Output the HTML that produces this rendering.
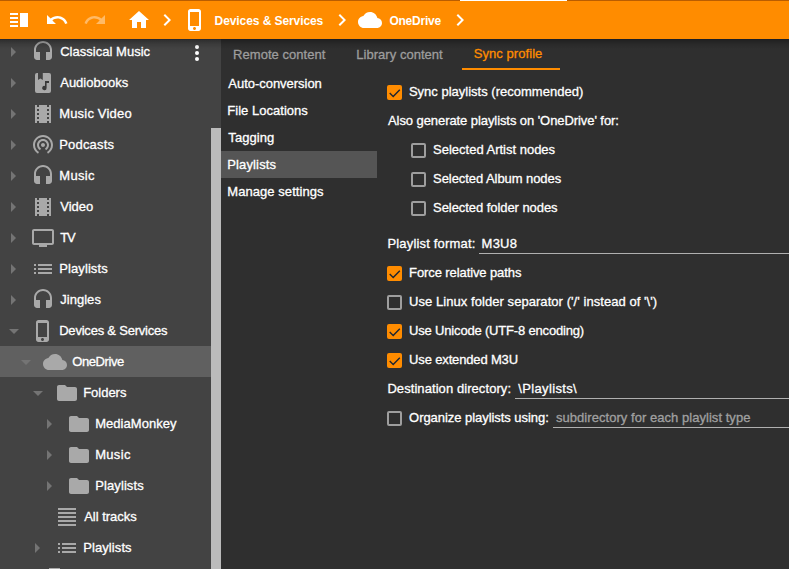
<!DOCTYPE html>
<html><head><meta charset="utf-8">
<style>
html,body{margin:0;padding:0;width:789px;height:569px;overflow:hidden;background:#2f2f2f;}
body{position:relative;font-family:"Liberation Sans",sans-serif;font-size:13px;color:#fff;}
.t{position:absolute;margin-top:1px;white-space:nowrap;line-height:16px;font-size:13px;color:#fff;-webkit-text-stroke:0.3px currentColor}
.cb{position:absolute;width:15px;height:15px;box-sizing:border-box;border-radius:2px}
.on{background:#ff8c00}
.off{border:2px solid #9e9e9e}
.ul{position:absolute;height:1px;background:#b0b0b0}
</style></head><body>
<div style="position:absolute;left:0;top:0;width:221px;height:569px;background:#434343;overflow:hidden">
<svg style="position:absolute;left:1px;top:40px" width="24" height="24" viewBox="0 0 24 24"><path fill="#747474" d="M10 17l5-5-5-5v10z"/></svg>
<svg style="position:absolute;left:31px;top:40px" width="24" height="24" viewBox="0 0 24 24"><path fill="#a9a9a9" d="M12 1c-4.97 0-9 4.03-9 9v7c0 1.66 1.34 3 3 3h3v-8H5v-2c0-3.87 3.13-7 7-7s7 3.13 7 7v2h-4v8h3c1.66 0 3-1.34 3-3v-7c0-4.97-4.03-9-9-9z"/></svg>
<div class="t" style="left:60.20px;top:43px;letter-spacing:0.023px;">Classical Music</div>
<svg style="position:absolute;left:1px;top:71px" width="24" height="24" viewBox="0 0 24 24"><path fill="#747474" d="M10 17l5-5-5-5v10z"/></svg>
<svg style="position:absolute;left:31px;top:71px" width="24" height="24" viewBox="0 0 24 24"><path fill="#a9a9a9" fill-rule="evenodd" d="M6 2h1v7l2.4-1.6L11.8 9V2H18a2 2 0 0 1 2 2v16a2 2 0 0 1-2 2H6a2 2 0 0 1-2-2V4a2 2 0 0 1 2-2z"/><path fill="#3a3a3a" d="M14 10h4v2h-2.4v5a2.2 2.2 0 1 1-1.6-2.1z"/></svg>
<div class="t" style="left:60.20px;top:74px;letter-spacing:0.018px;">Audiobooks</div>
<svg style="position:absolute;left:1px;top:102px" width="24" height="24" viewBox="0 0 24 24"><path fill="#747474" d="M10 17l5-5-5-5v10z"/></svg>
<svg style="position:absolute;left:31px;top:102px" width="24" height="24" viewBox="0 0 24 24"><path fill="#a9a9a9" d="M18 3v2h-2V3H8v2H6V3H4v18h2v-2h2v2h8v-2h2v2h2V3h-2zM8 17H6v-2h2v2zm0-4H6v-2h2v2zm0-4H6V7h2v2zm10 8h-2v-2h2v2zm0-4h-2v-2h2v2zm0-4h-2V7h2v2z"/></svg>
<div class="t" style="left:59.20px;top:105px;letter-spacing:0.186px;">Music Video</div>
<svg style="position:absolute;left:1px;top:133px" width="24" height="24" viewBox="0 0 24 24"><path fill="#747474" d="M10 17l5-5-5-5v10z"/></svg>
<svg style="position:absolute;left:31px;top:132px" width="24" height="24" viewBox="0 0 24 24"><path fill="#a9a9a9" d="M12 11c-1.1 0-2 .9-2 2s.9 2 2 2 2-.9 2-2-.9-2-2-2zm6 2c0-3.310-2.69-6-6-6s-6 2.69-6 6c0 2.220 1.21 4.15 3 5.19l1-1.74c-1.19-.7-2-1.97-2-3.45 0-2.21 1.79-4 4-4s4 1.79 4 4c0 1.48-.81 2.75-2 3.45l1 1.74c1.79-1.04 3-2.97 3-5.19zM12 3C6.48 3 2 7.48 2 13c0 3.7 2.01 6.92 4.99 8.650l1-1.73C5.61 18.53 4 15.96 4 13c0-4.42 3.58-8 8-8s8 3.58 8 8c0 2.96-1.61 5.53-4 6.92l1 1.73c2.99-1.73 5-4.95 5-8.65 0-5.52-4.48-10-10-10z"/></svg>
<div class="t" style="left:59.20px;top:136px;letter-spacing:0.190px;">Podcasts</div>
<svg style="position:absolute;left:1px;top:164px" width="24" height="24" viewBox="0 0 24 24"><path fill="#747474" d="M10 17l5-5-5-5v10z"/></svg>
<svg style="position:absolute;left:31px;top:164px" width="24" height="24" viewBox="0 0 24 24"><path fill="#a9a9a9" d="M12 1c-4.97 0-9 4.03-9 9v7c0 1.66 1.34 3 3 3h3v-8H5v-2c0-3.87 3.13-7 7-7s7 3.13 7 7v2h-4v8h3c1.66 0 3-1.34 3-3v-7c0-4.97-4.03-9-9-9z"/></svg>
<div class="t" style="left:59.20px;top:167px;letter-spacing:0.363px;">Music</div>
<svg style="position:absolute;left:1px;top:195px" width="24" height="24" viewBox="0 0 24 24"><path fill="#747474" d="M10 17l5-5-5-5v10z"/></svg>
<svg style="position:absolute;left:31px;top:195px" width="24" height="24" viewBox="0 0 24 24"><path fill="#a9a9a9" d="M18 3v2h-2V3H8v2H6V3H4v18h2v-2h2v2h8v-2h2v2h2V3h-2zM8 17H6v-2h2v2zm0-4H6v-2h2v2zm0-4H6V7h2v2zm10 8h-2v-2h2v2zm0-4h-2v-2h2v2zm0-4h-2V7h2v2z"/></svg>
<div class="t" style="left:60.20px;top:198px;letter-spacing:0.004px;">Video</div>
<svg style="position:absolute;left:1px;top:226px" width="24" height="24" viewBox="0 0 24 24"><path fill="#747474" d="M10 17l5-5-5-5v10z"/></svg>
<svg style="position:absolute;left:31px;top:226px" width="24" height="24" viewBox="0 0 24 24"><path fill="#a9a9a9" d="M21 3H3c-1.1 0-2 .9-2 2v12c0 1.1.9 2 2 2h5v2h8v-2h5c1.1 0 1.99-.9 1.99-2L23 5c0-1.1-.9-2-2-2zm0 14H3V5h18v12z"/></svg>
<div class="t" style="left:60.20px;top:229px;letter-spacing:-1.041px;">TV</div>
<svg style="position:absolute;left:1px;top:257px" width="24" height="24" viewBox="0 0 24 24"><path fill="#747474" d="M10 17l5-5-5-5v10z"/></svg>
<svg style="position:absolute;left:31px;top:257px" width="24" height="24" viewBox="0 0 24 24"><path fill="#a9a9a9" d="M3 13h2v-2H3v2zm0 4h2v-2H3v2zm0-8h2V7H3v2zm4 4h14v-2H7v2zm0 4h14v-2H7v2zM7 7v2h14V7H7z"/></svg>
<div class="t" style="left:59.20px;top:260px;letter-spacing:0.103px;">Playlists</div>
<svg style="position:absolute;left:1px;top:288px" width="24" height="24" viewBox="0 0 24 24"><path fill="#747474" d="M10 17l5-5-5-5v10z"/></svg>
<svg style="position:absolute;left:31px;top:288px" width="24" height="24" viewBox="0 0 24 24"><path fill="#a9a9a9" d="M12 1c-4.97 0-9 4.03-9 9v7c0 1.66 1.34 3 3 3h3v-8H5v-2c0-3.87 3.13-7 7-7s7 3.13 7 7v2h-4v8h3c1.66 0 3-1.34 3-3v-7c0-4.97-4.03-9-9-9z"/></svg>
<div class="t" style="left:60.20px;top:291px;letter-spacing:0.039px;">Jingles</div>
<svg style="position:absolute;left:2px;top:319px" width="24" height="24" viewBox="0 0 24 24"><path fill="#747474" d="M7 10l5 5 5-5z"/></svg>
<svg style="position:absolute;left:31px;top:319px" width="24" height="24" viewBox="0 0 24 24"><path fill="#a9a9a9" d="M15.5 1h-8C6.12 1 5 2.12 5 3.5v17C5 21.88 6.12 23 7.5 23h8c1.38 0 2.5-1.12 2.5-2.5v-17C18 2.12 16.88 1 15.5 1zm-4 21c-.83 0-1.5-.67-1.5-1.5s.67-1.5 1.5-1.5 1.5.67 1.5 1.5-.67 1.5-1.5 1.5zm4.5-4H7V4h9v14z"/></svg>
<div class="t" style="left:59.20px;top:322px;letter-spacing:-0.211px;">Devices &amp; Services</div>
<div style="position:absolute;left:0;top:346px;width:211px;height:31px;background:#606060"></div>
<svg style="position:absolute;left:14px;top:350px" width="24" height="24" viewBox="0 0 24 24"><path fill="#747474" d="M7 10l5 5 5-5z"/></svg>
<svg style="position:absolute;left:43px;top:350px" width="24" height="24" viewBox="0 0 24 24"><path fill="#a9a9a9" d="M19.35 10.04C18.67 6.59 15.64 4 12 4 9.11 4 6.6 5.64 5.35 8.04 2.34 8.36 0 10.91 0 14c0 3.31 2.69 6 6 6h13c2.76 0 5-2.24 5-5 0-2.64-2.05-4.78-4.65-4.96z"/></svg>
<div class="t" style="left:72.20px;top:353px;letter-spacing:-0.397px;">OneDrive</div>
<svg style="position:absolute;left:26px;top:381px" width="24" height="24" viewBox="0 0 24 24"><path fill="#747474" d="M7 10l5 5 5-5z"/></svg>
<svg style="position:absolute;left:55px;top:381px" width="24" height="24" viewBox="0 0 24 24"><path fill="#a9a9a9" d="M10 4H4c-1.1 0-1.99.9-1.99 2L2 18c0 1.1.9 2 2 2h16c1.1 0 2-.9 2-2V8c0-1.1-.9-2-2-2h-8l-2-2z"/></svg>
<div class="t" style="left:83.20px;top:384px;letter-spacing:-0.025px;">Folders</div>
<svg style="position:absolute;left:37px;top:412px" width="24" height="24" viewBox="0 0 24 24"><path fill="#747474" d="M10 17l5-5-5-5v10z"/></svg>
<svg style="position:absolute;left:67px;top:412px" width="24" height="24" viewBox="0 0 24 24"><path fill="#a9a9a9" d="M10 4H4c-1.1 0-1.99.9-1.99 2L2 18c0 1.1.9 2 2 2h16c1.1 0 2-.9 2-2V8c0-1.1-.9-2-2-2h-8l-2-2z"/></svg>
<div class="t" style="left:95.20px;top:415px;letter-spacing:0.037px;">MediaMonkey</div>
<svg style="position:absolute;left:37px;top:443px" width="24" height="24" viewBox="0 0 24 24"><path fill="#747474" d="M10 17l5-5-5-5v10z"/></svg>
<svg style="position:absolute;left:67px;top:443px" width="24" height="24" viewBox="0 0 24 24"><path fill="#a9a9a9" d="M10 4H4c-1.1 0-1.99.9-1.99 2L2 18c0 1.1.9 2 2 2h16c1.1 0 2-.9 2-2V8c0-1.1-.9-2-2-2h-8l-2-2z"/></svg>
<div class="t" style="left:95.20px;top:446px;letter-spacing:0.313px;">Music</div>
<svg style="position:absolute;left:37px;top:474px" width="24" height="24" viewBox="0 0 24 24"><path fill="#747474" d="M10 17l5-5-5-5v10z"/></svg>
<svg style="position:absolute;left:67px;top:474px" width="24" height="24" viewBox="0 0 24 24"><path fill="#a9a9a9" d="M10 4H4c-1.1 0-1.99.9-1.99 2L2 18c0 1.1.9 2 2 2h16c1.1 0 2-.9 2-2V8c0-1.1-.9-2-2-2h-8l-2-2z"/></svg>
<div class="t" style="left:95.20px;top:477px;letter-spacing:0.103px;">Playlists</div>
<svg style="position:absolute;left:55px;top:505px" width="24" height="24" viewBox="0 0 24 24"><path fill="#a9a9a9" d="M3 3h18v2H3zM3 7h18v2H3zM3 11h18v2H3zM3 15h18v2H3zM3 19h18v2H3z"/></svg>
<div class="t" style="left:84.20px;top:508px;letter-spacing:-0.014px;">All tracks</div>
<svg style="position:absolute;left:25px;top:536px" width="24" height="24" viewBox="0 0 24 24"><path fill="#747474" d="M10 17l5-5-5-5v10z"/></svg>
<svg style="position:absolute;left:55px;top:536px" width="24" height="24" viewBox="0 0 24 24"><path fill="#a9a9a9" d="M3 13h2v-2H3v2zm0 4h2v-2H3v2zm0-8h2V7H3v2zm4 4h14v-2H7v2zm0 4h14v-2H7v2zM7 7v2h14V7H7z"/></svg>
<div class="t" style="left:83.20px;top:539px;letter-spacing:0.090px;">Playlists</div>
<div style="position:absolute;left:49px;top:568px;width:11px;height:1px;background:#a9a9a9"></div>
<div style="position:absolute;left:195px;top:45px;width:4px;height:4px;border-radius:50%;background:#fff"></div>
<div style="position:absolute;left:195px;top:51px;width:4px;height:4px;border-radius:50%;background:#fff"></div>
<div style="position:absolute;left:195px;top:57px;width:4px;height:4px;border-radius:50%;background:#fff"></div>
<div style="position:absolute;left:211px;top:128px;width:10px;height:441px;background:#bbbbbb"></div>
</div>
<div style="position:absolute;left:462px;top:68px;width:98px;height:2px;background:#ff8c00"></div>
<div style="position:absolute;left:221px;top:151px;width:156px;height:27px;background:#555555"></div>
<div class="t" style="left:233.10px;top:46px;letter-spacing:0.034px;color:#9d9d9d">Remote content</div>
<div class="t" style="left:356.30px;top:46px;letter-spacing:0.030px;color:#9d9d9d">Library content</div>
<div class="t" style="left:473.80px;top:45px;letter-spacing:0.055px;color:#ff8c00">Sync profile</div>
<div class="t" style="left:228.30px;top:75px;letter-spacing:-0.029px;">Auto-conversion</div>
<div class="t" style="left:227.30px;top:102px;letter-spacing:0.022px;">File Locations</div>
<div class="t" style="left:228.30px;top:129px;letter-spacing:0.082px;">Tagging</div>
<div class="t" style="left:227.30px;top:156px;letter-spacing:0.128px;">Playlists</div>
<div class="t" style="left:227.30px;top:183px;letter-spacing:0.058px;">Manage settings</div>
<div class="t" style="left:408.90px;top:83px;letter-spacing:0.008px;">Sync playlists (recommended)</div>
<div class="t" style="left:388.00px;top:112px;letter-spacing:-0.076px;">Also generate playlists on 'OneDrive' for:</div>
<div class="t" style="left:433.10px;top:141px;letter-spacing:-0.007px;">Selected Artist nodes</div>
<div class="t" style="left:433.10px;top:170px;letter-spacing:-0.068px;">Selected Album nodes</div>
<div class="t" style="left:433.10px;top:199px;letter-spacing:-0.063px;">Selected folder nodes</div>
<div class="t" style="left:387.40px;top:235px;letter-spacing:0.178px;">Playlist format:</div>
<div class="t" style="left:481.60px;top:235px;letter-spacing:0.218px;">M3U8</div>
<div class="t" style="left:409.10px;top:264px;letter-spacing:-0.098px;">Force relative paths</div>
<div class="t" style="left:409.10px;top:293px;letter-spacing:0.055px;">Use Linux folder separator ('/' instead of '\')</div>
<div class="t" style="left:409.10px;top:322px;letter-spacing:-0.181px;">Use Unicode (UTF-8 encoding)</div>
<div class="t" style="left:409.10px;top:351px;letter-spacing:-0.153px;">Use extended M3U</div>
<div class="t" style="left:387.40px;top:380px;letter-spacing:0.072px;">Destination directory:</div>
<div class="t" style="left:518.20px;top:380px;letter-spacing:0.361px;">\Playlists\</div>
<div class="t" style="left:409.10px;top:409px;letter-spacing:-0.049px;">Organize playlists using:</div>
<div class="t" style="left:556.00px;top:409px;letter-spacing:0.044px;color:#a0a0a0">subdirectory for each playlist type</div>
<div class="cb on" style="left:387px;top:85px"><svg style="position:absolute;left:0;top:0" width="15" height="15" viewBox="0 0 15 15"><path d="M2.7 8.1L6.2 11.4L12.8 4.7" fill="none" stroke="#1c2533" stroke-width="1.4"/></svg></div>
<div class="cb off" style="left:411px;top:143px"></div>
<div class="cb off" style="left:411px;top:172px"></div>
<div class="cb off" style="left:411px;top:201px"></div>
<div class="cb on" style="left:387px;top:266px"><svg style="position:absolute;left:0;top:0" width="15" height="15" viewBox="0 0 15 15"><path d="M2.7 8.1L6.2 11.4L12.8 4.7" fill="none" stroke="#1c2533" stroke-width="1.4"/></svg></div>
<div class="cb off" style="left:387px;top:295px"></div>
<div class="cb on" style="left:387px;top:324px"><svg style="position:absolute;left:0;top:0" width="15" height="15" viewBox="0 0 15 15"><path d="M2.7 8.1L6.2 11.4L12.8 4.7" fill="none" stroke="#1c2533" stroke-width="1.4"/></svg></div>
<div class="cb on" style="left:387px;top:353px"><svg style="position:absolute;left:0;top:0" width="15" height="15" viewBox="0 0 15 15"><path d="M2.7 8.1L6.2 11.4L12.8 4.7" fill="none" stroke="#1c2533" stroke-width="1.4"/></svg></div>
<div class="cb off" style="left:387px;top:411px"></div>
<div class="ul" style="left:479px;top:253px;width:310px"></div>
<div class="ul" style="left:515px;top:398px;width:274px"></div>
<div class="ul" style="left:553px;top:427px;width:236px"></div>
<div style="position:absolute;left:0;top:39px;width:789px;height:1px;background:rgba(10,16,30,0.5)"></div>
<div style="position:absolute;left:0;top:40px;width:789px;height:9px;background:linear-gradient(rgba(0,0,0,0.3),rgba(0,0,0,0.12) 45%,rgba(0,0,0,0))"></div>
<div style="position:absolute;left:0;top:0;width:789px;height:39px;background:#ff8c00"></div>
<div style="position:absolute;left:0;top:0;width:789px;height:1px;background:#ba5d00"></div>
<div style="position:absolute;left:460px;top:0;width:107px;height:1px;background:#fff"></div>
<div style="position:absolute;left:10px;top:13px;width:8px;height:2px;background:#fff"></div>
<div style="position:absolute;left:10px;top:17px;width:8px;height:2px;background:#fff"></div>
<div style="position:absolute;left:10px;top:21px;width:8px;height:2px;background:#fff"></div>
<div style="position:absolute;left:10px;top:25px;width:8px;height:2px;background:#fff"></div>
<div style="position:absolute;left:20px;top:13px;width:8px;height:14px;background:#fff"></div>
<svg style="position:absolute;left:45px;top:8px" width="24" height="24" viewBox="0 0 24 24"><path fill="#fff" d="M12.5 8c-2.65 0-5.05.99-6.9 2.6L2 7v9h9l-3.62-3.62c1.39-1.16 3.16-1.88 5.12-1.88 3.54 0 6.55 2.310 7.6 5.5l2.37-.78C21.08 11.03 17.15 8 12.5 8z"/></svg>
<svg style="position:absolute;left:83px;top:8px" width="24" height="24" viewBox="0 0 24 24"><path fill="rgba(255,255,255,0.4)" d="M18.4 10.6C16.55 8.99 14.15 8 11.5 8c-4.65 0-8.58 3.03-9.96 7.22L3.9 16c1.05-3.19 4.05-5.5 7.6-5.5 1.95 0 3.73.72 5.12 1.88L13 16h9V7l-3.6 3.6z"/></svg>
<svg style="position:absolute;left:126.5px;top:8px" width="24" height="24" viewBox="0 0 24 24"><path fill="#fff" d="M10 20v-6h4v6h5v-8h3L12 3 2 12h3v8z"/></svg>
<svg style="position:absolute;left:155px;top:8px" width="24" height="24" viewBox="0 0 24 24"><path fill="#fff" d="M10 6L8.59 7.41 13.17 12l-4.58 4.59L10 18l6-6z"/></svg>
<svg style="position:absolute;left:183px;top:8px" width="24" height="24" viewBox="0 0 24 24"><path fill="#fff" d="M15.5 1h-8C6.12 1 5 2.12 5 3.5v17C5 21.88 6.12 23 7.5 23h8c1.38 0 2.5-1.12 2.5-2.5v-17C18 2.12 16.88 1 15.5 1zm-4 21c-.83 0-1.5-.67-1.5-1.5s.67-1.5 1.5-1.5 1.5.67 1.5 1.5-.67 1.5-1.5 1.5zm4.5-4H7V4h9v14z"/></svg>
<div class="t" style="left:214.60px;top:12px;letter-spacing:-0.083px;font-size:12px;font-weight:bold;-webkit-text-stroke:0">Devices &amp; Services</div>
<svg style="position:absolute;left:330px;top:8px" width="24" height="24" viewBox="0 0 24 24"><path fill="#fff" d="M10 6L8.59 7.41 13.17 12l-4.58 4.59L10 18l6-6z"/></svg>
<svg style="position:absolute;left:358px;top:8px" width="24" height="24" viewBox="0 0 24 24"><path fill="#fff" d="M19.35 10.04C18.67 6.59 15.64 4 12 4 9.11 4 6.6 5.64 5.35 8.04 2.34 8.36 0 10.91 0 14c0 3.31 2.69 6 6 6h13c2.76 0 5-2.24 5-5 0-2.64-2.05-4.78-4.65-4.96z"/></svg>
<div class="t" style="left:389.40px;top:12px;letter-spacing:-0.226px;font-size:12px;font-weight:bold;-webkit-text-stroke:0">OneDrive</div>
<svg style="position:absolute;left:448px;top:8px" width="24" height="24" viewBox="0 0 24 24"><path fill="#fff" d="M10 6L8.59 7.41 13.17 12l-4.58 4.59L10 18l6-6z"/></svg>
</body></html>
